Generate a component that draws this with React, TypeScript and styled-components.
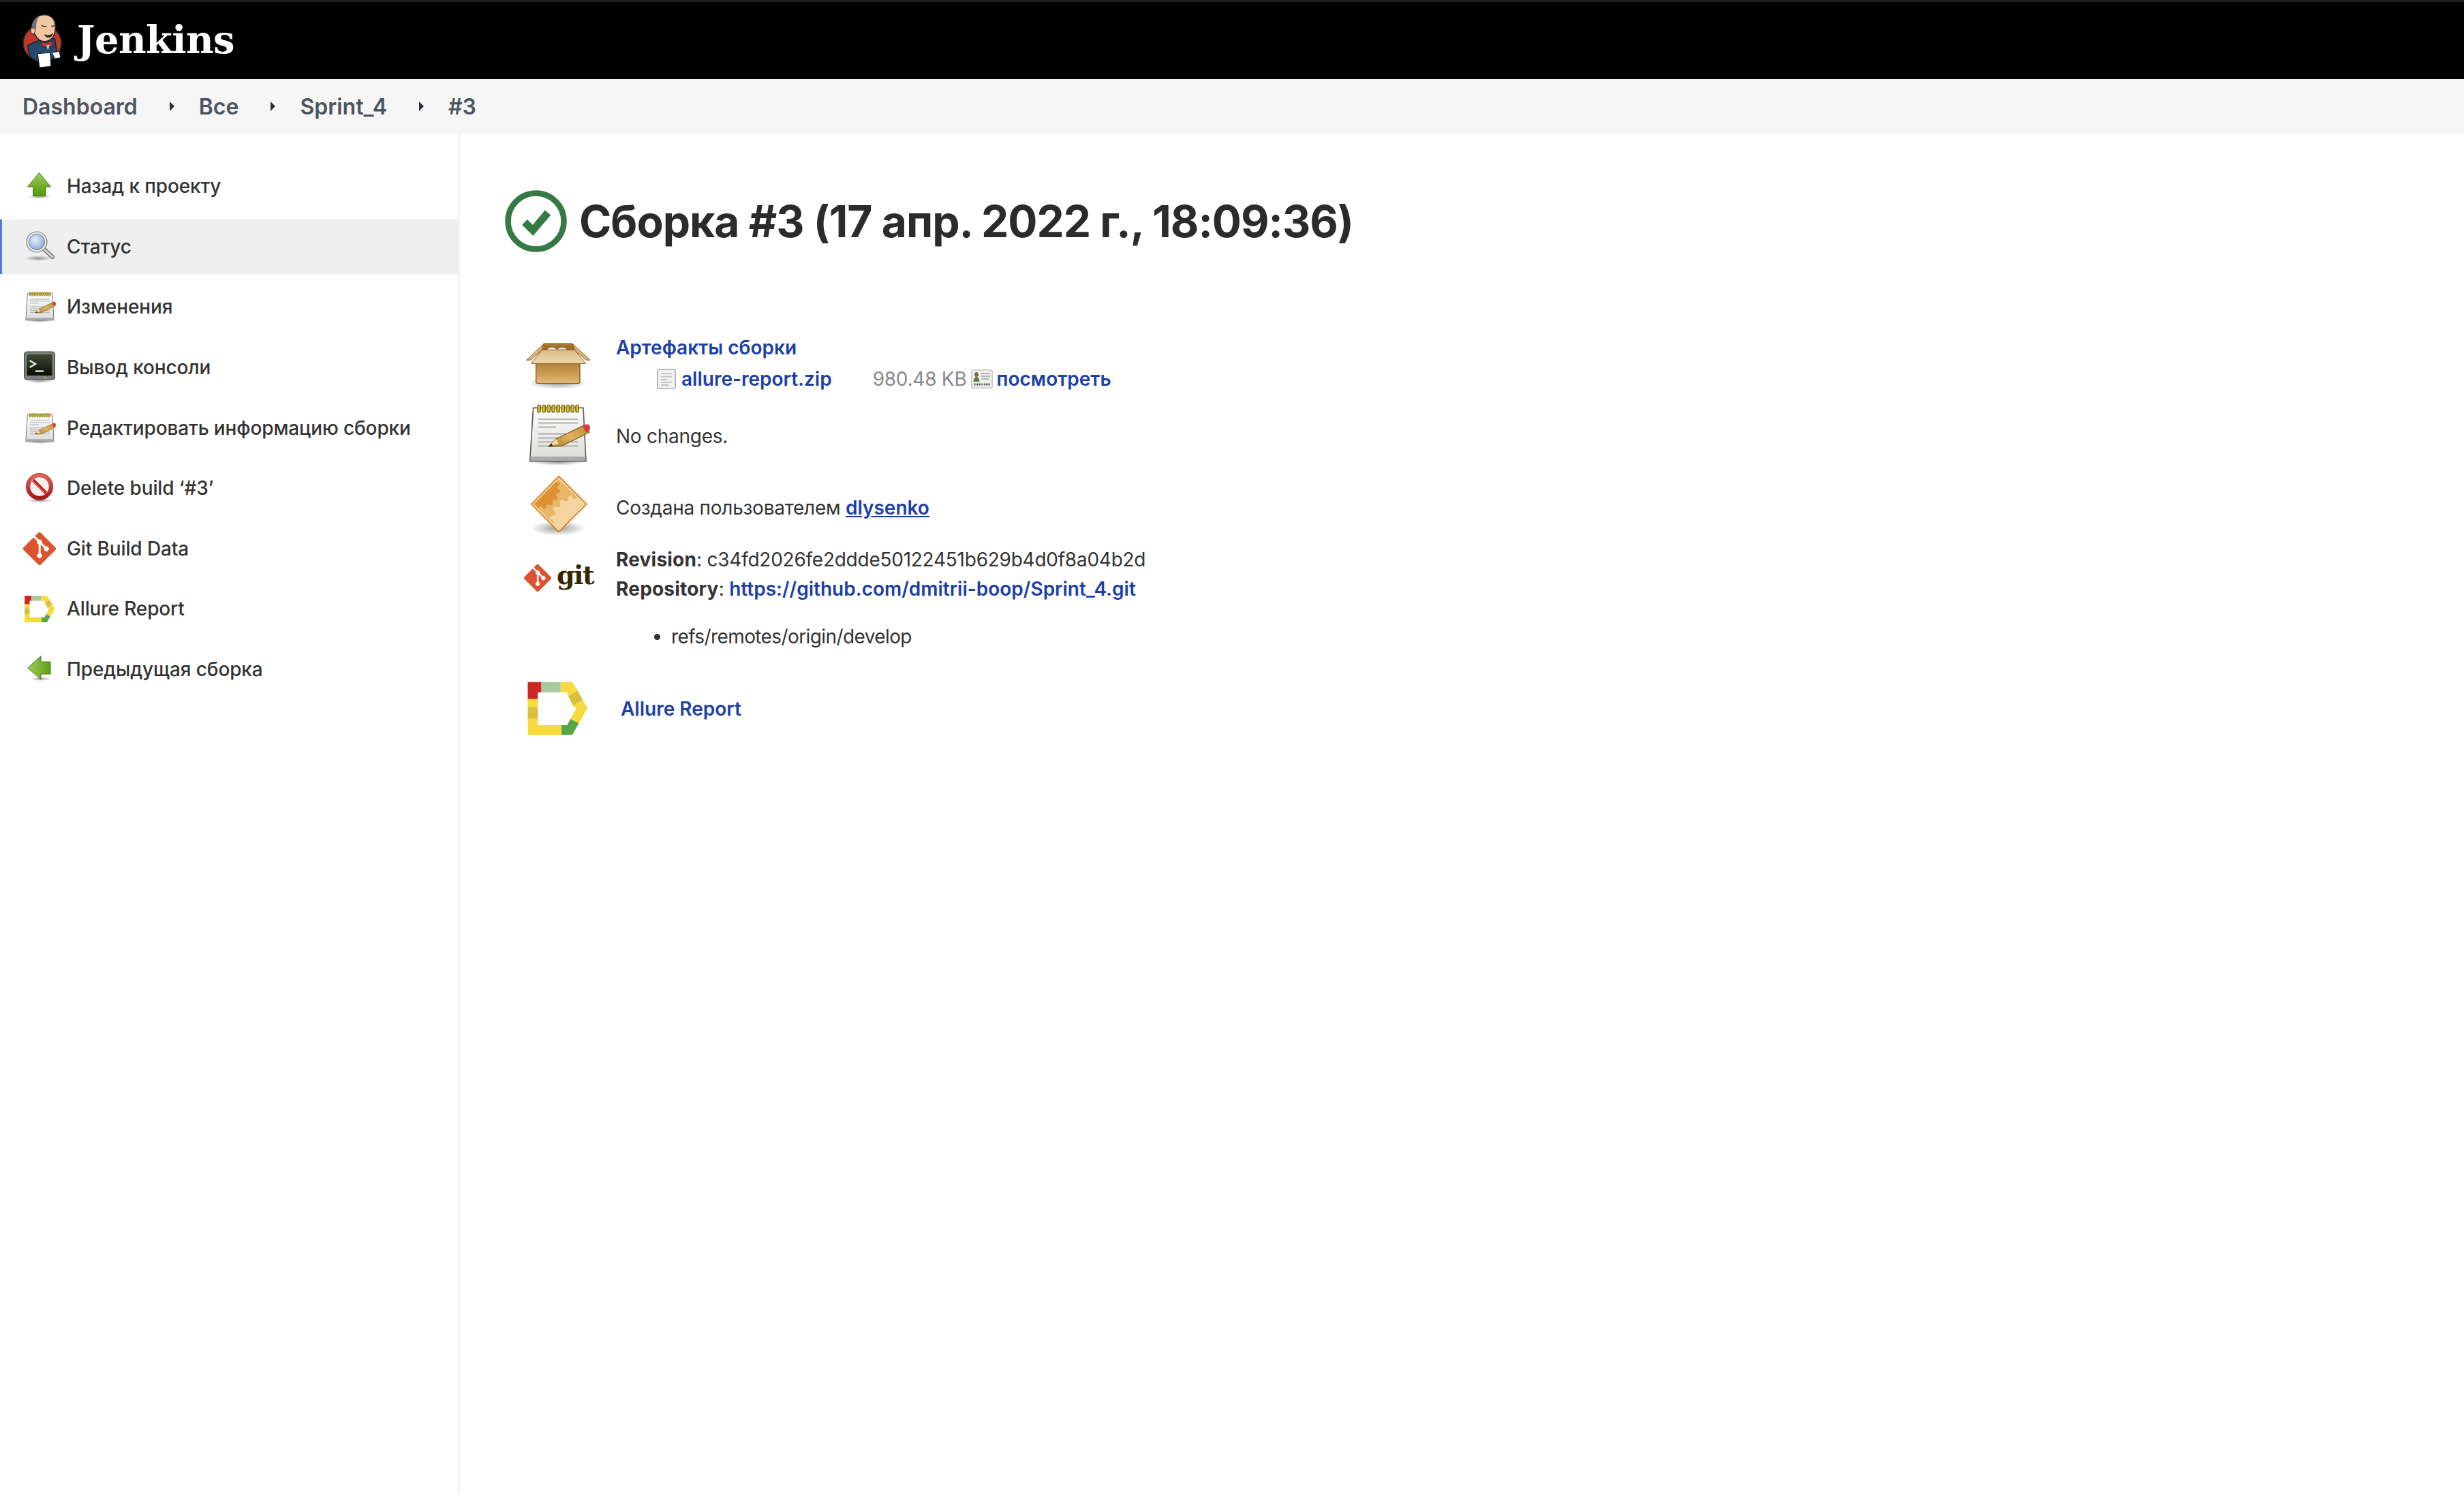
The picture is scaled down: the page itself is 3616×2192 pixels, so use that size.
import React from "react";
import styled, { createGlobalStyle } from "styled-components";

const Global = createGlobalStyle`
  html, body { margin: 0; padding: 0; background: #fff; }
  body { font-family: Inter, "Noto Sans", "Liberation Sans", sans-serif; color: #333; }
`;

const Page = styled.div`
  width: 3616px;
  height: 2192px;
  display: flex;
  flex-direction: column;
  overflow: hidden;
`;

const Header = styled.header`
  height: 116px;
  box-sizing: border-box;
  flex: none;
  background: #000;
  border-top: 3px solid #1e1e24;
  display: flex;
  align-items: center;
  padding-left: 31px;
`;

const Brand = styled.span`
  font-family: "DejaVu Serif", Georgia, serif;
  font-weight: 700;
  font-size: 56px;
  letter-spacing: -0.6px;
  color: #fff;
  margin-left: 20px;
  margin-top: -4px;
`;

const Breadcrumbs = styled.nav`
  height: 80px;
  flex: none;
  background: #f6f6f7;
  display: flex;
  align-items: center;
  padding-left: 33px;
  font-size: 32px;
  font-weight: 600;
  color: #4d545d;
`;

const Crumb = styled.span``;

const Chevron = styled.i`
  width: 0;
  height: 0;
  margin: 0 36px 0 47px;
  border-left: 7px solid #2c3038;
  border-top: 7px solid transparent;
  border-bottom: 7px solid transparent;
`;

const Body = styled.div`
  flex: 1;
  display: flex;
`;

const Sidebar = styled.aside`
  width: 672px;
  flex: none;
  box-sizing: content-box;
  border-right: 3px solid #f3f3f3;
  padding-top: 37px;
`;

const Task = styled.div<{ $active?: boolean }>`
  height: 80px;
  margin-bottom: 8.65px;
  display: flex;
  align-items: center;
  gap: 16px;
  box-sizing: border-box;
  padding-left: 34px;
  font-size: 28px;
  font-weight: 500;
  letter-spacing: -0.12px;
  color: #333;
  background: ${(p) => (p.$active ? "#efefef" : "transparent")};
  box-shadow: ${(p) => (p.$active ? "inset 3px 0 0 #4a7fd6" : "none")};
`;

const IconSlot = styled.span`
  width: 48px;
  height: 48px;
  flex: none;
  display: flex;
  align-items: center;
  justify-content: center;
`;

const Main = styled.main`
  flex: 1;
  padding: 83px 0 0 66px;
`;

const Title = styled.h1`
  margin: 0 0 118px;
  height: 91px;
  display: flex;
  align-items: center;
  gap: 18px;
  font-size: 64px;
  font-weight: 700;
  color: #2b2b2b;
  letter-spacing: -1px;
`;

const Rows = styled.div`
  margin-left: 29px;
  font-size: 28px;
  color: #333;
  letter-spacing: -0.25px;

  b {
    letter-spacing: 0.2px;
    font-weight: 700;
  }
`;

const Row = styled.section<{ $height?: number; $top?: number }>`
  display: flex;
  align-items: ${(p) => (p.$height ? "center" : "flex-start")};
  height: ${(p) => (p.$height ? `${p.$height}px` : "auto")};
  margin-top: ${(p) => p.$top ?? 0}px;
`;

const IconCell = styled.div`
  width: 96px;
  height: 96px;
  flex: none;
  margin-right: 38px;
  display: flex;
  align-items: center;
  justify-content: center;
`;

const Content = styled.div<{ $down?: number; $up?: number }>`
  line-height: 43px;
  margin-top: ${(p) => p.$down ?? 0}px;
  margin-bottom: ${(p) => p.$up ?? 0}px;
`;

const Link = styled.a<{ $underline?: boolean }>`
  color: #1c40a6;
  font-weight: 600;
  letter-spacing: 0;
  text-decoration: ${(p) => (p.$underline ? "underline" : "none")};
`;

const ArtifactLine = styled.div`
  margin-top: 3px;
  margin-left: 60px;
  display: flex;
  align-items: center;
`;

const ViewLink = styled(Link)`
  margin-left: 6px;
`;

const FileSize = styled.span`
  color: #888;
  margin: 0 6px 0 60px;
`;

const RefList = styled.ul`
  margin: 27px 0 0;
  padding: 0 0 0 81px;
  letter-spacing: -0.6px;
`;

const AllureLink = styled(Link)`
  margin-left: 7px;
`;

const GitLogo = styled.div`
  display: flex;
  align-items: center;
  gap: 8px;
  margin-left: 4px;
`;

const GitWord = styled.span`
  font-family: "DejaVu Serif", Georgia, serif;
  font-weight: 700;
  font-size: 38px;
  letter-spacing: -1.5px;
  line-height: 1;
  color: #362701;
  margin-top: -8px;
`;

const Shadow = ({ cx = 24, cy = 42, rx = 18, ry = 3.5, id }: { cx?: number; cy?: number; rx?: number; ry?: number; id: string }) => (
  <>
    <defs>
      <radialGradient id={id}>
        <stop offset="0" stopColor="#000" stopOpacity=".4" />
        <stop offset="1" stopColor="#000" stopOpacity="0" />
      </radialGradient>
    </defs>
    <ellipse cx={cx} cy={cy} rx={rx} ry={ry} fill={`url(#${id})`} />
  </>
);

const JenkinsLogo = () => (
  <svg width="62" height="84" viewBox="90 54 186 252">
    <ellipse cx="183" cy="190" rx="84" ry="80" fill="#c0392b" stroke="#2a2a2a" strokeWidth="5" />
    <path d="M120 198 L172 176 L238 170 L246 225 L226 262 L165 272 L135 256 Q118 230 120 198Z" fill="#24496d" stroke="#1a1a1a" strokeWidth="4" />
    <path d="M134 128 Q138 70 190 65 Q240 66 241 120 Q240 165 212 178 Q182 190 162 168 L150 150 Q128 150 134 128Z" fill="#efc7a2" stroke="#222" strokeWidth="4" />
    <path d="M136 122 Q140 84 172 68 Q154 92 156 128 L146 122Z" fill="#6d7278" />
    <path d="M132 128 Q140 118 152 128 Q152 142 146 150 Q130 150 132 128Z" fill="#efc7a2" stroke="#222" strokeWidth="3" />
    <path d="M180 112 Q190 120 202 114 M222 114 Q230 118 238 112" fill="none" stroke="#222" strokeWidth="4" />
    <path d="M192 150 Q210 160 232 146 Q226 165 208 166 Q196 164 192 150Z" fill="#3a2a20" />
    <path d="M175 182 L200 190 L228 178 L226 206 L204 198 L188 210Z" fill="#d6322a" stroke="#222" strokeWidth="3" />
    <path d="M200 198 L216 198 L208 222Z" fill="#a9c4da" />
    <path d="M226 232 L258 226 L264 254 L238 258Z" fill="#fff" stroke="#222" strokeWidth="3" />
    <path d="M163 236 L218 232 L221 292 L171 297Z" fill="#fff" stroke="#222" strokeWidth="3" />
  </svg>
);

const UpArrow = () => (
  <svg width="48" height="48" viewBox="0 0 48 48">
    <Shadow id="s-up" cy="39.5" rx="18" ry="3" />
    <defs>
      <linearGradient id="g-up" x1="0" x2="0" y1="0" y2="1">
        <stop offset="0" stopColor="#a2cc5e" />
        <stop offset="1" stopColor="#4e9a06" />
      </linearGradient>
    </defs>
    <path d="M23.5 4.5 L40.5 25 L33 25 L33 38.5 L14.5 38.5 L14.5 25 L6.5 25Z" fill="url(#g-up)" stroke="#4a7a18" strokeWidth="1" />
  </svg>
);

const LeftArrow = () => (
  <svg width="48" height="48" viewBox="0 0 48 48">
    <Shadow id="s-left" cx="26" cy="38" rx="15" ry="3" />
    <defs>
      <linearGradient id="g-left" x1="0" x2="1" y1="0" y2="0">
        <stop offset="0" stopColor="#a2cc5e" />
        <stop offset="1" stopColor="#5aa011" />
      </linearGradient>
    </defs>
    <path d="M6.5 22 L26 4.5 L26 13 L40 13 L40 31 L26 31 L26 38.5Z" fill="url(#g-left)" stroke="#4a7a18" strokeWidth="1" />
  </svg>
);

const Magnifier = () => (
  <svg width="48" height="48" viewBox="0 0 48 48">
    <Shadow id="s-mag" cx="22" cy="41" rx="20" ry="4" />
    <defs>
      <radialGradient id="g-lens" cx=".4" cy=".35" r=".8">
        <stop offset="0" stopColor="#e4ecf8" />
        <stop offset="1" stopColor="#7f9fd8" />
      </radialGradient>
    </defs>
    <path d="M30 27 L43 39" stroke="#666" strokeWidth="6" strokeLinecap="round" />
    <path d="M30 27 L43 39" stroke="#d2d4d0" strokeWidth="3.6" strokeLinecap="round" />
    <circle cx="20" cy="17" r="15" fill="#e6e7e4" stroke="#7f817d" strokeWidth="1.2" />
    <circle cx="20" cy="17" r="11.5" fill="url(#g-lens)" stroke="#6a7c9c" strokeWidth="1" />
  </svg>
);

const Notepad = ({ size = 48, id }: { size?: number; id: string }) => (
  <svg width={size} height={size} viewBox="0 0 48 48">
    <Shadow id={`${id}-s`} cx="24" cy="44.5" rx="20" ry="2.5" />
    <defs>
      <linearGradient id={`${id}-p`} x1="0" x2="0" y1="0" y2="1">
        <stop offset="0" stopColor="#fbfbfb" />
        <stop offset="1" stopColor="#dcdcd8" />
      </linearGradient>
      <linearGradient id={`${id}-w`} x1="0" x2="1" y1="1" y2="0">
        <stop offset="0" stopColor="#a87c2c" />
        <stop offset=".5" stopColor="#e2b45e" />
        <stop offset="1" stopColor="#b98a34" />
      </linearGradient>
    </defs>
    <path d="M6.3 4.7 L43 4.7 L45 43.8 L3.8 43.8Z" fill={`url(#${id}-p)`} stroke="#5a5a5a" strokeWidth=".8" strokeLinejoin="round" />
    <rect x="4.3" y="40.4" width="40.3" height="3" fill="#aaa" />
    <path d="M10 13H39 M10 15.8H39 M10 18.8H23 M10 23.8H39 M10 26.8H39 M10 29.7H39 M10 32.7H39" stroke="#a5a5a5" strokeWidth=".8" />
    {[0, 1, 2, 3, 4, 5, 6, 7, 8].map((i) => (
      <rect key={i} x={9.4 + i * 3.5} y="2.5" width="2.3" height="5.5" rx="1.1" fill="#d2b92e" stroke="#74660f" strokeWidth=".6" />
    ))}
    <path d="M17.5 33 L23 27.5 L43.5 17.5 L47.5 22.5 L27 32.8Z" fill={`url(#${id}-w)`} stroke="#7a5a1c" strokeWidth=".6" />
    <path d="M17.5 33 L23 27.5 L25 31 Z" fill="#f2d9ae" />
    <path d="M17.5 33 L19.7 30.9 L20.6 32.6Z" fill="#222" />
    <path d="M42.5 18 L45 16.8 Q47.5 16.5 48 19 Q48 21 47 21.7 L45 22.7Z" fill="#d83a3a" />
  </svg>
);

const Terminal = () => (
  <svg width="48" height="48" viewBox="0 0 48 48">
    <Shadow id="s-term" cx="24" cy="44" rx="20" ry="3" />
    <defs>
      <linearGradient id="g-scr" x1="0" x2="0" y1="0" y2="1">
        <stop offset="0" stopColor="#3e4a33" />
        <stop offset="1" stopColor="#0a0d08" />
      </linearGradient>
    </defs>
    <rect x="1.5" y="1" width="45" height="41" rx="4" fill="#7d7f7a" stroke="#3c3d3a" strokeWidth="1" />
    <rect x="5.5" y="5" width="37" height="31" fill="url(#g-scr)" />
    <path d="M9.5 14 L18 19 L9.5 24" fill="none" stroke="#e6f0d8" strokeWidth="2.4" />
    <path d="M18 29.5H30" stroke="#e6f0d8" strokeWidth="2.4" />
    <rect x="31" y="38" width="2" height="2" fill="#9ad04a" />
  </svg>
);

const NoEntry = () => (
  <svg width="48" height="48" viewBox="0 0 48 48">
    <Shadow id="s-no" cx="24" cy="42.5" rx="20" ry="3" />
    <defs>
      <linearGradient id="g-no" x1="0" x2="0" y1="0" y2="1">
        <stop offset="0" stopColor="#e26a62" />
        <stop offset="1" stopColor="#a80f0f" />
      </linearGradient>
    </defs>
    <circle cx="24" cy="22" r="19.6" fill="url(#g-no)" stroke="#8a1a14" strokeWidth=".8" />
    <circle cx="24" cy="22" r="13.8" fill="#f5f1ee" />
    <path d="M14.5 12.5 L33.5 31.5" stroke="#c4201c" strokeWidth="5" />
    <path d="M12 12 L32 32" stroke="#fff" strokeWidth=".9" opacity=".85" />
  </svg>
);

const GitDiamond = ({ size = 48 }: { size?: number }) => (
  <svg width={size} height={size} viewBox="0 0 92 92">
    <path
      fill="#dc5330"
      d="M90.156 41.965 50.036 1.848a5.918 5.918 0 0 0-8.372 0l-8.328 8.332 10.566 10.566a7.03 7.03 0 0 1 7.23 1.684 7.034 7.034 0 0 1 1.669 7.277l10.187 10.184a7.028 7.028 0 0 1 7.278 1.672 7.04 7.04 0 0 1 0 9.957 7.05 7.05 0 0 1-9.965 0 7.044 7.044 0 0 1-1.528-7.66l-9.5-9.497V59.36a7.04 7.04 0 0 1 1.86 11.29 7.04 7.04 0 0 1-9.957 0 7.04 7.04 0 0 1 0-9.958 7.06 7.06 0 0 1 2.304-1.539V33.926a7.049 7.049 0 0 1-3.82-9.234L29.242 14.272 1.73 41.777a5.925 5.925 0 0 0 0 8.371L41.852 90.27a5.925 5.925 0 0 0 8.37 0l39.934-39.934a5.925 5.925 0 0 0 0-8.371"
    />
  </svg>
);

const AllureLogo = ({ big }: { big?: boolean }) => (
  <svg width={big ? 92 : 46} height={big ? 81 : 41} viewBox="100 655 275 243">
    <path d="M107 660H167V705H151V735H107Z" fill="#c9271f" />
    <path d="M167 660H252V705H167Z" fill="#a8c99c" />
    <path d="M252 660H303L326 698L285 722L280 705H252Z" fill="#f7da3e" />
    <path d="M285 722L326 698L349 738L306 764Z" fill="#d9bf3c" />
    <path d="M306 764L349 738L370 775L332 842L295 822L320 775Z" fill="#f7da3e" />
    <path d="M280 850L295 822L332 842L303 893H255V850Z" fill="#56a54a" />
    <path d="M107 822H151V850H255V893H107Z" fill="#f7da3e" />
    <path d="M107 735H151V770H107Z" fill="#f7da3e" />
    <path d="M107 770H151V822H107Z" fill="#d9bf3c" />
  </svg>
);

const CardBox = () => (
  <svg width="96" height="96" viewBox="0 0 48 48">
    <Shadow id="s-box" cx="24.2" cy="37.5" rx="22" ry="4.5" />
    <defs>
      <linearGradient id="g-box" x1="0" x2="0" y1="0" y2="1">
        <stop offset="0" stopColor="#b27e35" />
        <stop offset="1" stopColor="#e2b976" />
      </linearGradient>
      <linearGradient id="g-lid" x1="0" x2="0" y1="0" y2="1">
        <stop offset="0" stopColor="#dcbb84" />
        <stop offset="1" stopColor="#f0d8ac" />
      </linearGradient>
    </defs>
    <path d="M14 8.5H35L37 14H12Z" fill="#a97a32" stroke="#8a5f22" strokeWidth=".5" />
    <path d="M14.5 10H35.5L36.5 14H13Z" fill="#9c7029" />
    <ellipse cx="20" cy="14" rx="3.7" ry="2.6" fill="#eee" />
    <ellipse cx="27.5" cy="14" rx="3.7" ry="2.6" fill="#ddd" />
    <path d="M14.2 8.5 L1.2 20.7 L4.7 20.5 L12.5 13.2Z" fill="#d8b57a" stroke="#8a5f22" strokeWidth=".5" />
    <path d="M35 8.5 L48 20.7 L44.7 20.5 L36.7 13.2Z" fill="#d8b57a" stroke="#8a5f22" strokeWidth=".5" />
    <rect x="8.3" y="22.5" width="32.2" height="15.3" rx="1.5" fill="url(#g-box)" stroke="#8a5f22" strokeWidth=".7" />
    <path d="M12.5 13.2H36.7L44.7 23.2H4.7Z" fill="url(#g-lid)" stroke="#8a5f22" strokeWidth=".5" />
  </svg>
);

// cog outline used on the build cause icon
const gearPath = (cx: number, cy: number, r: number, depth: number, teeth: number) => {
  const pts: string[] = [];
  for (let i = 0; i < teeth; i++) {
    const a = (i / teeth) * Math.PI * 2;
    const step = (Math.PI * 2) / teeth;
    [
      [a, r],
      [a + step * 0.22, r + depth],
      [a + step * 0.5, r + depth],
      [a + step * 0.72, r],
    ].forEach(([ang, rad]) => {
      pts.push(`${(cx + Math.cos(ang) * rad).toFixed(2)} ${(cy + Math.sin(ang) * rad).toFixed(2)}`);
    });
  }
  return `M${pts.join("L")}Z`;
};

const GearDiamond = () => (
  <svg width="96" height="96" viewBox="0 0 48 48">
    <Shadow id="s-gear" cx="24.5" cy="40" rx="20" ry="5.5" />
    <defs>
      <clipPath id="c-dia">
        <path d="M25 4 L43.4 22.3 L25 40.6 L6.8 22.3Z" />
      </clipPath>
    </defs>
    <path d="M25 2 L45.3 22.3 L25 42.6 L5 22.3Z" fill="#f7e2bd" stroke="#e07f22" strokeWidth="1" strokeLinejoin="round" />
    <g clipPath="url(#c-dia)">
      <rect x="4" y="2" width="42" height="42" fill="#e9b566" />
      <path d={gearPath(11, 11, 13, 2, 16)} fill="#dc9130" />
      <path d={gearPath(38, 35, 16.5, 3, 16)} fill="#f5d59f" />
    </g>
  </svg>
);

const StatusCheck = () => (
  <svg width="91" height="91" viewBox="0 0 91 91">
    <circle cx="45.5" cy="45.5" r="41" fill="none" stroke="#357a45" strokeWidth="8.5" />
    <path d="M29 47 L41 59 L63 33" fill="none" stroke="#357a45" strokeWidth="11" />
  </svg>
);

const PageGlyph = styled.svg`
  margin-right: 8px;
  flex: none;
`;

const PageIcon = () => (
  <PageGlyph width="28" height="30" viewBox="0 0 28 30">
    <rect x="1" y="1" width="26" height="28" rx="1.5" fill="#f2f2f2" stroke="#aaa" strokeWidth="1.6" />
    <path d="M6 7H22 M6 11.5H22 M6 16H15 M6 20H22 M6 24H17" stroke="#c4c4c4" strokeWidth="2" />
  </PageGlyph>
);

const IdCard = () => (
  <svg width="32" height="28" viewBox="0 0 32 28">
    <rect x=".8" y=".8" width="30.4" height="26.4" rx="2" fill="#f0f0ec" stroke="#bbb" strokeWidth="1.2" />
    <ellipse cx="8" cy="7.5" rx="3" ry="3.6" fill="#8a6a3c" />
    <path d="M3.5 18 Q4 11 8 11 Q12 11 12.5 18Z" fill="#5f7f3c" />
    <path d="M15 6H28 M15 10H28 M15 14H26" stroke="#777" strokeWidth="1.2" />
    <path d="M4 22H28" stroke="#555" strokeWidth="3" strokeDasharray="1.5 1" />
  </svg>
);

const tasks = [
  { label: "Назад к проекту", icon: <UpArrow /> },
  { label: "Статус", icon: <Magnifier />, active: true },
  { label: "Изменения", icon: <Notepad id="np1" /> },
  { label: "Вывод консоли", icon: <Terminal /> },
  { label: "Редактировать информацию сборки", icon: <Notepad id="np2" /> },
  { label: "Delete build ‘#3’", icon: <NoEntry /> },
  { label: "Git Build Data", icon: <GitDiamond /> },
  { label: "Allure Report", icon: <AllureLogo /> },
  { label: "Предыдущая сборка", icon: <LeftArrow /> },
];

const crumbs = ["Dashboard", "Все", "Sprint_4", "#3"];

export default function App() {
  return (
    <Page>
      <Global />
      <Header>
        <JenkinsLogo />
        <Brand>Jenkins</Brand>
      </Header>
      <Breadcrumbs>
        {crumbs.map((c, i) => (
          <React.Fragment key={c}>
            {i > 0 && <Chevron />}
            <Crumb>{c}</Crumb>
          </React.Fragment>
        ))}
      </Breadcrumbs>
      <Body>
        <Sidebar>
          {tasks.map((t) => (
            <Task key={t.label} $active={t.active}>
              <IconSlot>{t.icon}</IconSlot>
              {t.label}
            </Task>
          ))}
        </Sidebar>
        <Main>
          <Title>
            <StatusCheck />
            Сборка #3 (17 апр. 2022 г., 18:09:36)
          </Title>
          <Rows>
            <Row $height={94}>
              <IconCell>
                <CardBox />
              </IconCell>
              <Content $up={4}>
                <Link>Артефакты сборки</Link>
                <ArtifactLine>
                  <PageIcon />
                  <Link>allure-report.zip</Link>
                  <FileSize>980.48 KB</FileSize>
                  <IdCard />
                  <ViewLink>посмотреть</ViewLink>
                </ArtifactLine>
              </Content>
            </Row>
            <Row $height={109}>
              <IconCell>
                <Notepad size={96} id="np3" />
              </IconCell>
              <Content $down={7}>No changes.</Content>
            </Row>
            <Row $height={104}>
              <IconCell>
                <GearDiamond />
              </IconCell>
              <Content $down={4}>
                Создана пользователем <Link $underline>dlysenko</Link>
              </Content>
            </Row>
            <Row $top={5}>
              <IconCell>
                <GitLogo>
                  <GitDiamond size={40} />
                  <GitWord>git</GitWord>
                </GitLogo>
              </IconCell>
              <Content>
                <div>
                  <b>Revision</b>: c34fd2026fe2ddde50122451b629b4d0f8a04b2d
                </div>
                <div>
                  <b>Repository</b>: <Link>https://github.com/dmitrii-boop/Sprint_4.git</Link>
                </div>
                <RefList>
                  <li>refs/remotes/origin/develop</li>
                </RefList>
              </Content>
            </Row>
            <Row $height={96} $top={35}>
              <IconCell>
                <AllureLogo big />
              </IconCell>
              <Content $down={3}>
                <AllureLink>Allure Report</AllureLink>
              </Content>
            </Row>
          </Rows>
        </Main>
      </Body>
    </Page>
  );
}
